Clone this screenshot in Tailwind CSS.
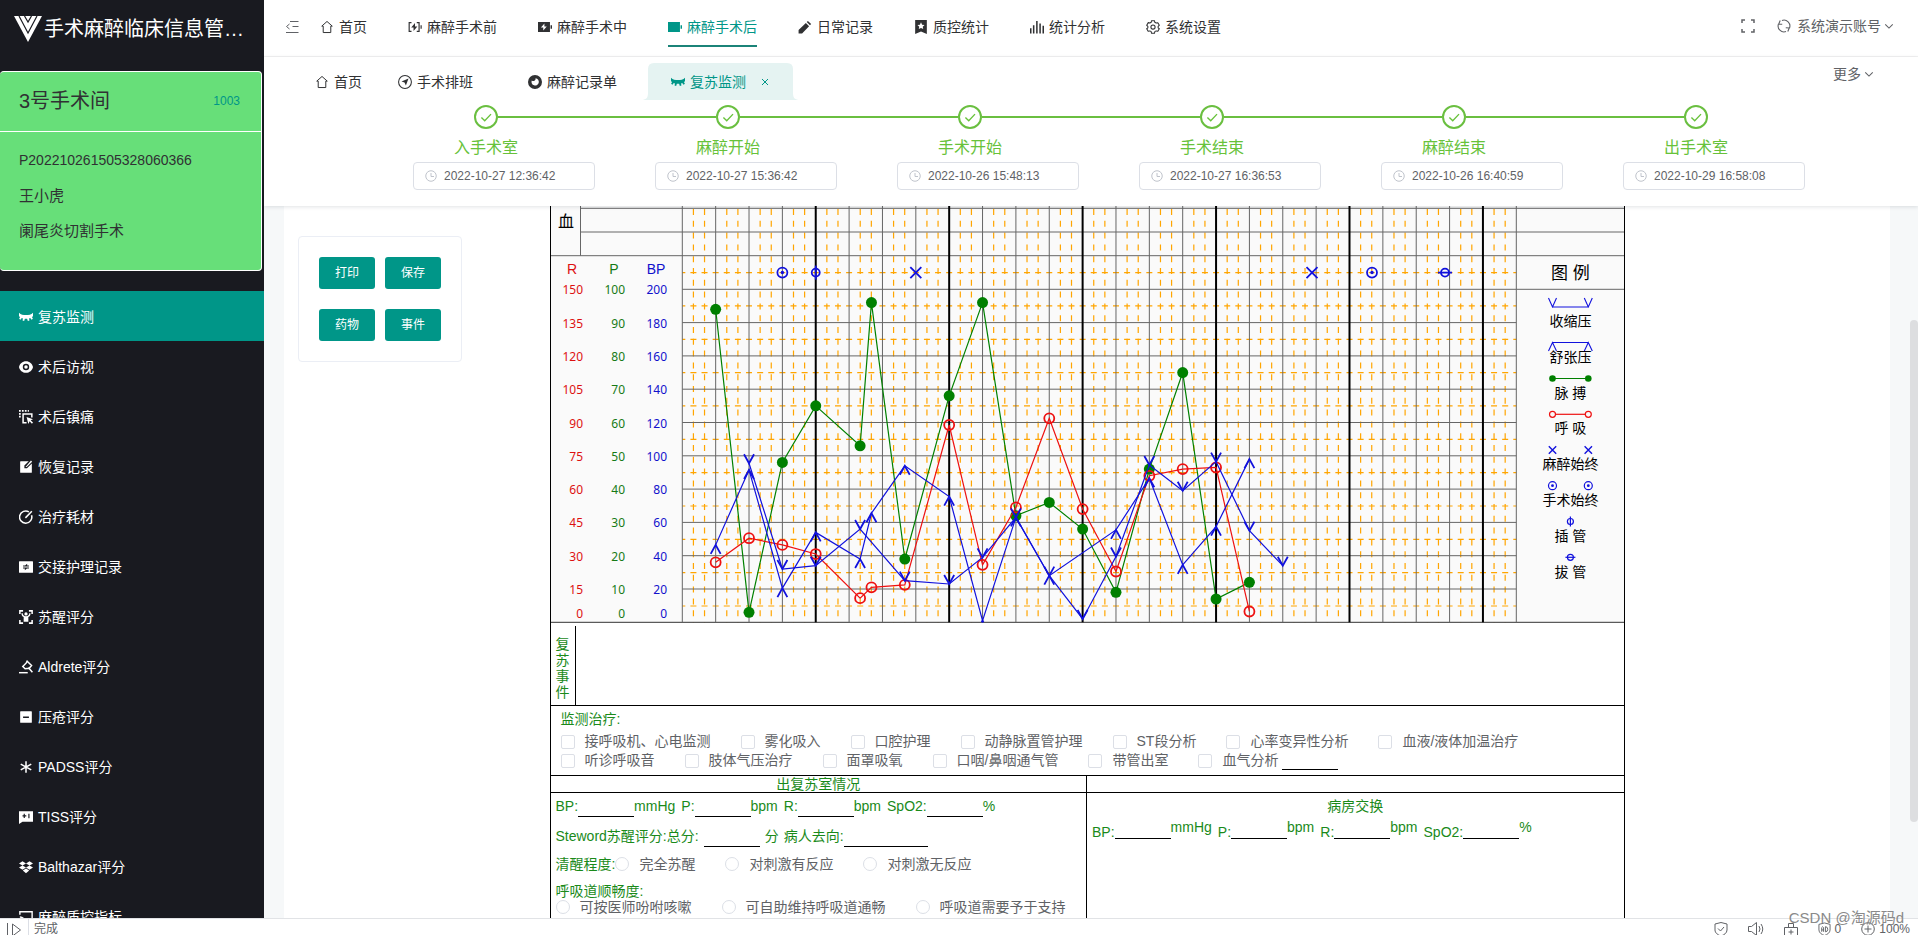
<!DOCTYPE html>
<html lang="zh-CN">
<head>
<meta charset="utf-8">
<title>手术麻醉临床信息管理系统</title>
<script src="https://cdn.jsdelivr.net/npm/@tailwindcss/browser@4"></script>
</head>
<body class="h-screen overflow-hidden bg-white font-['Liberation_Sans','Noto_Sans_CJK_SC',sans-serif] text-[14px] text-[#303133]">
<svg class="hidden" aria-hidden="true">
  <defs>
    <symbol id="home" viewBox="0 0 24 24"><path d="M12 2.500 21 10.500h-2.500V21.500h-13V10.500H3z" fill="none" stroke="currentColor" stroke-width="1.700" stroke-linejoin="round"/></symbol>
    <symbol id="eye-close" viewBox="0 0 24 24"><path fill="currentColor" d="M0 4.500c3 3.200 7.500 4.200 12 4.200s9-1 12-4.200v6l-1.800 1.300 1.600 3.200-2.200 1.600-2.400-3c-.7.400-1.200.7-2 .9l.7 3.600-2.700.7-1.300-3.600h-3.800l-1.300 3.600-2.700-.7.700-3.600c-.8-.2-1.300-.5-2-.9l-2.400 3L.2 15l1.600-3.200L0 10.500z"/></symbol>
    <symbol id="eye" viewBox="0 0 24 24"><path fill="currentColor" fill-rule="evenodd" d="M12 2c6 0 11 4.300 12 10-1 5.700-6 10-12 10S1 17.700 0 12C1 6.300 6 2 12 2zm0 4.500a5.500 5.500 0 1 0 0 11 5.500 5.500 0 0 0 0-11zm0 2.500a3 3 0 1 1 0 6 3 3 0 0 1 0-6z"/></symbol>
    <symbol id="drag-select" viewBox="0 0 24 24"><path fill="currentColor" d="M0 0h3v3H0zM5 0h3v3H5zM10 0h3v3h-3zM15 0h2v3h-2zM0 5h3v3H0zM0 10h3v3H0z"/><path fill="none" stroke="currentColor" stroke-width="2.600" d="M13 22H7V7h15v6"/><path fill="currentColor" d="m13 12 11 4-4 1.600 4 4-1.800 1.800-4-4L16 24z"/></symbol>
    <symbol id="edit-box" viewBox="0 0 24 24"><path fill="currentColor" d="m16.700 2-7.500 7.500V14h4.500L22 5.900V21a1 1 0 0 1-1 1H3a1 1 0 0 1-1-1V3a1 1 0 0 1 1-1z"/><path fill="currentColor" d="m20.500 1 2 2-9.400 9.100-1.900-.1z"/></symbol>
    <symbol id="restart" viewBox="0 0 24 24"><path fill="none" stroke="currentColor" stroke-width="2.600" d="M17 3.200A10.500 10.500 0 1 0 21.500 9M11 13.500 22 2"/></symbol>
    <symbol id="swap-box" viewBox="0 0 24 24"><path fill="currentColor" fill-rule="evenodd" d="M1 2h22a1 1 0 0 1 1 1v18a1 1 0 0 1-1 1H1a1 1 0 0 1-1-1V3a1 1 0 0 1 1-1zm6 9h10V9.300h-3V6.500L10.500 9.300H7zm0 2v1.700h3v2.800l3.500-2.800H17V13z"/></symbol>
    <symbol id="body-scan" viewBox="0 0 24 24"><path fill="none" stroke="currentColor" stroke-width="2.600" d="M1.500 7V1.500H7M17 1.500h5.500V7M22.500 17v5.500H17M7 22.500H1.500V17"/><path fill="currentColor" d="M12 4a2.800 2.800 0 1 1 0 5.600A2.800 2.800 0 0 1 12 4zM6.500 5.500c0 3 1.500 5 5.500 5s5.500-2 5.500-5h2.300c0 3.500-1.300 5.300-3.800 6.500V20H8v-8c-2.500-1.200-3.800-3-3.800-6.500z"/></symbol>
    <symbol id="auction" viewBox="0 0 24 24"><path fill="none" stroke="currentColor" stroke-width="2.600" d="m14 2 7.500 7.500-4 4.500-7 1-4-4L12.500 5zM16 13l7 8"/><path fill="currentColor" d="M0 20.500h15V23H0z"/></symbol>
    <symbol id="minus-box" viewBox="0 0 24 24"><path fill="currentColor" fill-rule="evenodd" d="M3 2h18a1 1 0 0 1 1 1v18a1 1 0 0 1-1 1H3a1 1 0 0 1-1-1V3a1 1 0 0 1 1-1zm4 9v2.500h10V11z"/></symbol>
    <symbol id="asterisk" viewBox="0 0 24 24"><path fill="none" stroke="currentColor" stroke-width="2.600" d="M12 2v20M3 7l18 10M21 7 3 17"/></symbol>
    <symbol id="score-chat" viewBox="0 0 24 24"><path fill="currentColor" fill-rule="evenodd" d="M0 2h24v18H6l-6 4zm10 4.500H8v2.700H6v2h2v2.700h2v-2.700h2.500v-2H10zm6 0v7.500h2V6.500z"/></symbol>
    <symbol id="dropbox" viewBox="0 0 24 24"><path fill="currentColor" d="m6 2 6 3.800-6 3.700-6-3.700zM18 2l6 3.800-6 3.700-6-3.700zM0 13l6-3.500 6 3.500-6 3.800zM18 9.500l6 3.500-6 3.800-6-3.800zM6.500 18l5.500-3.500 5.500 3.500-5.500 4.500z"/></symbol>
    <symbol id="cast" viewBox="0 0 24 24"><path fill="none" stroke="currentColor" stroke-width="2.400" d="M1.500 8V3h21v18H14M1.500 12a9 9 0 0 1 9 9M1.500 17a4 4 0 0 1 4 4"/></symbol>
    <symbol id="battery-line" viewBox="0 0 24 24"><path fill="none" stroke="currentColor" stroke-width="2" d="M6 4.500H2v15h4M15 4.500h4v15h-4M22.500 9v6"/><path fill="currentColor" d="M12 5v6h4l-6.500 8v-6H5.500z"/></symbol>
    <symbol id="battery-charge" viewBox="0 0 24 24"><path fill="currentColor" fill-rule="evenodd" d="M0 3.500h20.500v17H0zm11 2.500-6 7h4v5l6-7h-4z"/><path fill="currentColor" d="M21.500 9h2.500v6h-2.500z"/></symbol>
    <symbol id="battery-full" viewBox="0 0 24 24"><path fill="currentColor" d="M0 3.500h20.500v17H0zM21.500 9h2.500v6h-2.500z"/></symbol>
    <symbol id="pencil" viewBox="0 0 24 24"><path fill="currentColor" d="M1 23v-6L13.500 5 19 10.500 7 23zM15 3.500 17 1.500l5.500 5.500-2 2z"/></symbol>
    <symbol id="bookmark" viewBox="0 0 24 24"><path fill="currentColor" fill-rule="evenodd" d="M2 0h20v24l-10-4.500L2 24zm10 4-1.900 4-4.200.5 3.100 2.900-.8 4.200L12 13.600l3.800 2-.8-4.200 3.100-2.900-4.200-.5z"/></symbol>
    <symbol id="bars" viewBox="0 0 24 24"><path fill="currentColor" d="M0 14h2.600v9H0zM5 9h2.600v14H5zM10.500 1.500h2.600V23h-2.600zM16 6h2.600v17H16zM21.400 10H24v13h-2.600z"/></symbol>
    <symbol id="gear" viewBox="0 0 24 24"><path fill="none" stroke="currentColor" stroke-width="1.800" stroke-linejoin="round" d="m9.500 1.200-.6 2.700-2.300 1.300-2.700-.7L1.200 9l2 1.800v2.600l-2 1.600 2.500 4.400 2.900-.7 2.300 1.300.6 2.800h5l.6-2.800 2.300-1.300 2.900.7 2.500-4.400-2-1.600v-2.600l2-1.800-2.500-4.400-2.900.6-2.300-1.300-.6-2.700z"/><circle cx="12" cy="12" r="3.600" fill="none" stroke="currentColor" stroke-width="1.800"/></symbol>
    <symbol id="compass" viewBox="0 0 24 24"><circle cx="12" cy="12" r="11" fill="none" stroke="currentColor" stroke-width="1.800"/><path fill="currentColor" d="M18 6 13.500 18l-2.300-5-5.200-2z"/></symbol>
    <symbol id="moon-disc" viewBox="0 0 24 24"><path fill="currentColor" fill-rule="evenodd" d="M12 0a12 12 0 1 1 0 24 12 12 0 0 1 0-24zm1 5.500a4 4 0 0 1-6.500 3.800A6.300 6.300 0 1 0 13 5.500z"/></symbol>
    <symbol id="check" viewBox="0 0 24 24"><path fill="none" stroke="currentColor" stroke-width="1.600" d="m6.500 12.500 4 4 7.500-8"/></symbol>
    <symbol id="clock" viewBox="0 0 24 24"><circle cx="12" cy="12" r="10.500" fill="none" stroke="currentColor" stroke-width="2"/><path fill="none" stroke="currentColor" stroke-width="2" d="M12 6v7h6"/></symbol>
    <symbol id="chevron" viewBox="0 0 24 24"><path fill="none" stroke="currentColor" stroke-width="2.600" d="m3 8 9 9 9-9"/></symbol>
  </defs>
</svg>

<div class="flex h-full flex-col">
  <div class="flex min-h-0 flex-1">

    <!-- Sidebar -->
    <aside class="flex w-[264px] shrink-0 flex-col overflow-hidden bg-[#191a20] text-white">
      <div class="flex h-[58px] shrink-0 items-center pl-[14px] text-[20px]">
        <svg class="mr-[2px] h-[26px] w-[28px] shrink-0" viewBox="0 0 28 26"><path fill="#fff" d="M0 0h28L14 26z"/><path fill="none" stroke="#191a20" stroke-width="1.200" d="m5 0 9 17 9-17M10.500 0l3.500 6 3.500-6"/></svg>
        <h1>手术麻醉临床信息管…</h1>
      </div>
      <section class="mt-[13px] mr-[2px] h-[200px] shrink-0 rounded-[4px] border border-l-0 border-white bg-[#67df79] text-[15px] text-[#303133]">
        <div class="flex h-[60px] items-center justify-between border-b border-white pr-[21px] pb-[2px] pl-[19px]">
          <h2 class="text-[20px]">3号手术间</h2>
          <a href="#" class="text-[12px] text-[#009688]">1003</a>
        </div>
        <div class="pt-[11px] pl-[19px] leading-[35px]">
          <p class="text-[14px] leading-[35px]">P202210261505328060366</p>
          <p>王小虎</p>
          <p>阑尾炎切割手术</p>
        </div>
      </section>
      <nav class="mt-[20px]">
        <a href="#" class="flex h-[50px] items-center gap-[5px] bg-[#009688] pt-[2px] pl-[19px]"><svg class="size-[14px]"><use href="#eye-close"/></svg>复苏监测</a>
        <a href="#" class="flex h-[50px] items-center gap-[5px] pt-[2px] pl-[19px]"><svg class="size-[14px]"><use href="#eye"/></svg>术后访视</a>
        <a href="#" class="flex h-[50px] items-center gap-[5px] pt-[2px] pl-[19px]"><svg class="size-[14px]"><use href="#drag-select"/></svg>术后镇痛</a>
        <a href="#" class="flex h-[50px] items-center gap-[5px] pt-[2px] pl-[19px]"><svg class="size-[14px]"><use href="#edit-box"/></svg>恢复记录</a>
        <a href="#" class="flex h-[50px] items-center gap-[5px] pt-[2px] pl-[19px]"><svg class="size-[14px]"><use href="#restart"/></svg>治疗耗材</a>
        <a href="#" class="flex h-[50px] items-center gap-[5px] pt-[2px] pl-[19px]"><svg class="size-[14px]"><use href="#swap-box"/></svg>交接护理记录</a>
        <a href="#" class="flex h-[50px] items-center gap-[5px] pt-[2px] pl-[19px]"><svg class="size-[14px]"><use href="#body-scan"/></svg>苏醒评分</a>
        <a href="#" class="flex h-[50px] items-center gap-[5px] pt-[2px] pl-[19px]"><svg class="size-[14px]"><use href="#auction"/></svg>Aldrete评分</a>
        <a href="#" class="flex h-[50px] items-center gap-[5px] pt-[2px] pl-[19px]"><svg class="size-[14px]"><use href="#minus-box"/></svg>压疮评分</a>
        <a href="#" class="flex h-[50px] items-center gap-[5px] pt-[2px] pl-[19px]"><svg class="size-[14px]"><use href="#asterisk"/></svg>PADSS评分</a>
        <a href="#" class="flex h-[50px] items-center gap-[5px] pt-[2px] pl-[19px]"><svg class="size-[14px]"><use href="#score-chat"/></svg>TISS评分</a>
        <a href="#" class="flex h-[50px] items-center gap-[5px] pt-[2px] pl-[19px]"><svg class="size-[14px]"><use href="#dropbox"/></svg>Balthazar评分</a>
        <a href="#" class="flex h-[50px] items-center gap-[5px] pt-[2px] pl-[19px]"><svg class="size-[14px]"><use href="#cast"/></svg>麻醉质控指标</a>
      </nav>
    </aside>

    <div class="flex min-w-0 flex-1 flex-col">
      <!-- Top navigation -->
      <header class="flex h-[57px] shrink-0 items-center border-b border-[#f2f2f2] pr-[24px] pb-[2px] pl-[21px]">
        <button type="button" aria-label="折叠菜单" class="mr-[21px] text-[#606266]"><svg class="block size-[14px]" viewBox="0 0 14 14"><path fill="none" stroke="currentColor" d="M5 1.500h8.500M7.500 6.500h6M1 12.500h12.500M4.500 4 1.500 6.500l3 2.500"/></svg></button>
        <nav class="flex h-full items-center gap-[41px] leading-[22px]">
          <a href="#" class="flex items-center gap-[5px]"><svg class="size-[14px]"><use href="#home"/></svg>首页</a>
          <a href="#" class="flex items-center gap-[5px]"><svg class="size-[14px]"><use href="#battery-line"/></svg>麻醉手术前</a>
          <a href="#" class="flex items-center gap-[5px]"><svg class="size-[14px]"><use href="#battery-charge"/></svg>麻醉手术中</a>
          <a href="#" class="flex h-[40px] items-center gap-[5px] border-y-2 border-t-transparent border-b-[#1b8378] text-[#009688]"><svg class="size-[14px]"><use href="#battery-full"/></svg>麻醉手术后</a>
          <a href="#" class="flex items-center gap-[5px]"><svg class="size-[14px]"><use href="#pencil"/></svg>日常记录</a>
          <a href="#" class="flex items-center gap-[5px]"><svg class="size-[14px]"><use href="#bookmark"/></svg>质控统计</a>
          <a href="#" class="flex items-center gap-[5px]"><svg class="size-[14px]"><use href="#bars"/></svg>统计分析</a>
          <a href="#" class="flex items-center gap-[5px]"><svg class="size-[14px]"><use href="#gear"/></svg>系统设置</a>
        </nav>
        <div class="ml-auto flex items-center pb-[2px] text-[#606266]">
          <button type="button" aria-label="全屏" class="mr-[22px]"><svg class="block size-[14px]" viewBox="0 0 14 14"><path fill="none" stroke="currentColor" stroke-width="1.500" d="M1 4V1h3M10 1h3v3M13 10v3h-3M4 13H1v-3"/></svg></button>
          <button type="button" aria-label="刷新" class="mr-[6px]"><svg class="block size-[14px]" viewBox="0 0 24 24"><path fill="none" stroke="currentColor" stroke-width="1.900" d="M8.500 2.400a10.200 10.200 0 0 1 13 13M15.500 21.600a10.200 10.200 0 0 1-13-13M5.500 2.500 3 8.500l6 .5M18.500 21.500l2.500-6-6-.5"/></svg></button>
          <button type="button" class="flex items-center gap-[3px] leading-[22px]">系统演示账号<svg class="size-[10px]"><use href="#chevron"/></svg></button>
        </div>
      </header>

      <!-- Open tabs and operation timeline -->
      <div class="z-10 flex h-[149px] shrink-0 flex-col bg-white shadow-[0_1px_4px_rgba(0,21,41,0.12)]">
        <div class="flex h-[43px] items-start pr-[44px] pl-[51px] leading-[22px]">
          <nav class="mt-[6px] flex h-[37px] items-center">
            <a href="#" class="mr-[36px] flex items-center gap-[5px]"><svg class="size-[14px]"><use href="#home"/></svg>首页</a>
            <a href="#" class="mr-[55px] flex items-center gap-[5px]"><svg class="size-[14px]"><use href="#compass"/></svg>手术排班</a>
            <a href="#" class="flex items-center gap-[5px]"><svg class="size-[14px]"><use href="#moon-disc"/></svg>麻醉记录单</a>
            <div class="relative ml-[24px] flex h-[37px] w-[159px] items-center pl-[30px] text-[#009688]">
              <svg class="absolute inset-0 h-full w-full" viewBox="0 0 159 37" preserveAspectRatio="none"><path fill="#e5f3f2" d="M0 37c5 0 7-2 7-7V6q0-6 6-6h133q6 0 6 6v24c0 5 2 7 7 7z"/></svg>
              <a href="#" class="relative flex items-center gap-[5px]"><svg class="size-[14px]"><use href="#eye-close"/></svg>复苏监测</a>
              <button type="button" aria-label="关闭标签" class="relative ml-[15px]"><svg class="block size-[8px]" viewBox="0 0 8 8"><path fill="none" stroke="currentColor" d="m1 1 6 6M7 1 1 7"/></svg></button>
            </div>
          </nav>
          <button type="button" class="mt-[6px] ml-auto flex items-center gap-[3px] text-[#606266]">更多<svg class="size-[10px]"><use href="#chevron"/></svg></button>
        </div>
        <ol class="grid grid-cols-6 px-[101px] pt-[5px] text-[#67c23a]">
          <li class="flex flex-col items-center">
            <div class="flex w-full items-center"><i class="flex-1"></i><span class="size-[24px] rounded-full border-2 border-[#6abf40]"><svg class="size-[20px]"><use href="#check"/></svg></span><i class="h-[2px] flex-1 bg-[#6abf40]"></i></div>
            <label for="t1" class="mt-[6px] text-[16px] leading-[26px]">入手术室</label>
            <div class="mt-px ml-[36px] flex h-[28px] w-[182px] items-center rounded-[4px] border border-[#dcdfe6] pl-[11px]"><svg class="mr-[7px] size-[12px] shrink-0 text-[#c0c4cc]"><use href="#clock"/></svg><input id="t1" class="w-full min-w-0 text-[12px] text-[#606266] outline-none" value="2022-10-27 12:36:42"></div>
          </li>
          <li class="flex flex-col items-center">
            <div class="flex w-full items-center"><i class="h-[2px] flex-1 bg-[#6abf40]"></i><span class="size-[24px] rounded-full border-2 border-[#6abf40]"><svg class="size-[20px]"><use href="#check"/></svg></span><i class="h-[2px] flex-1 bg-[#6abf40]"></i></div>
            <label for="t2" class="mt-[6px] text-[16px] leading-[26px]">麻醉开始</label>
            <div class="mt-px ml-[36px] flex h-[28px] w-[182px] items-center rounded-[4px] border border-[#dcdfe6] pl-[11px]"><svg class="mr-[7px] size-[12px] shrink-0 text-[#c0c4cc]"><use href="#clock"/></svg><input id="t2" class="w-full min-w-0 text-[12px] text-[#606266] outline-none" value="2022-10-27 15:36:42"></div>
          </li>
          <li class="flex flex-col items-center">
            <div class="flex w-full items-center"><i class="h-[2px] flex-1 bg-[#6abf40]"></i><span class="size-[24px] rounded-full border-2 border-[#6abf40]"><svg class="size-[20px]"><use href="#check"/></svg></span><i class="h-[2px] flex-1 bg-[#6abf40]"></i></div>
            <label for="t3" class="mt-[6px] text-[16px] leading-[26px]">手术开始</label>
            <div class="mt-px ml-[36px] flex h-[28px] w-[182px] items-center rounded-[4px] border border-[#dcdfe6] pl-[11px]"><svg class="mr-[7px] size-[12px] shrink-0 text-[#c0c4cc]"><use href="#clock"/></svg><input id="t3" class="w-full min-w-0 text-[12px] text-[#606266] outline-none" value="2022-10-26 15:48:13"></div>
          </li>
          <li class="flex flex-col items-center">
            <div class="flex w-full items-center"><i class="h-[2px] flex-1 bg-[#6abf40]"></i><span class="size-[24px] rounded-full border-2 border-[#6abf40]"><svg class="size-[20px]"><use href="#check"/></svg></span><i class="h-[2px] flex-1 bg-[#6abf40]"></i></div>
            <label for="t4" class="mt-[6px] text-[16px] leading-[26px]">手术结束</label>
            <div class="mt-px ml-[36px] flex h-[28px] w-[182px] items-center rounded-[4px] border border-[#dcdfe6] pl-[11px]"><svg class="mr-[7px] size-[12px] shrink-0 text-[#c0c4cc]"><use href="#clock"/></svg><input id="t4" class="w-full min-w-0 text-[12px] text-[#606266] outline-none" value="2022-10-27 16:36:53"></div>
          </li>
          <li class="flex flex-col items-center">
            <div class="flex w-full items-center"><i class="h-[2px] flex-1 bg-[#6abf40]"></i><span class="size-[24px] rounded-full border-2 border-[#6abf40]"><svg class="size-[20px]"><use href="#check"/></svg></span><i class="h-[2px] flex-1 bg-[#6abf40]"></i></div>
            <label for="t5" class="mt-[6px] text-[16px] leading-[26px]">麻醉结束</label>
            <div class="mt-px ml-[36px] flex h-[28px] w-[182px] items-center rounded-[4px] border border-[#dcdfe6] pl-[11px]"><svg class="mr-[7px] size-[12px] shrink-0 text-[#c0c4cc]"><use href="#clock"/></svg><input id="t5" class="w-full min-w-0 text-[12px] text-[#606266] outline-none" value="2022-10-26 16:40:59"></div>
          </li>
          <li class="flex flex-col items-center">
            <div class="flex w-full items-center"><i class="h-[2px] flex-1 bg-[#6abf40]"></i><span class="size-[24px] rounded-full border-2 border-[#6abf40]"><svg class="size-[20px]"><use href="#check"/></svg></span><i class="flex-1"></i></div>
            <label for="t6" class="mt-[6px] text-[16px] leading-[26px]">出手术室</label>
            <div class="mt-px ml-[36px] flex h-[28px] w-[182px] items-center rounded-[4px] border border-[#dcdfe6] pl-[11px]"><svg class="mr-[7px] size-[12px] shrink-0 text-[#c0c4cc]"><use href="#clock"/></svg><input id="t6" class="w-full min-w-0 text-[12px] text-[#606266] outline-none" value="2022-10-29 16:58:08"></div>
          </li>
        </ol>
      </div>

      <!-- Record sheet -->
      <main class="relative min-h-0 flex-1 overflow-hidden bg-[#f6f8f9] pr-[28px] pl-[20px]">
        <div class="grid min-h-full grid-cols-[1fr_auto_1fr] bg-white">
          <div class="pt-[30px] pl-[14px]">
            <div class="grid h-[126px] w-[164px] grid-cols-2 content-start gap-x-[10px] gap-y-[20px] rounded-[4px] border border-[#ebeef5] px-[20px] pt-[20px] text-[12px] text-white">
              <button type="button" class="h-[32px] rounded-[3px] bg-[#009688]">打印</button>
              <button type="button" class="h-[32px] rounded-[3px] bg-[#009688]">保存</button>
              <button type="button" class="h-[32px] rounded-[3px] bg-[#009688]">药物</button>
              <button type="button" class="h-[32px] rounded-[3px] bg-[#009688]">事件</button>
            </div>
          </div>

          <article class="w-[1075px] border-x border-black">
            <svg id="chart" class="block h-[417px] w-full" viewBox="0 0 1073 417" role="img" aria-label="生命体征曲线"></svg>

            <section class="flex h-[83px] border-b border-black pt-[3px]">
              <h3 class="flex w-[25px] flex-col items-center border-r border-black pt-[10px] leading-[16px] text-[#1a8a1a]"><span>复</span><span>苏</span><span>事</span><span>件</span></h3>
            </section>

            <section class="h-[70px] border-b border-black pt-[4px] pl-[10px] leading-[19px] text-[#606266]">
              <h3 class="mb-[3px] text-[#1a8a1a]">监测治疗:</h3>
              <div class="flex gap-[30px]">
                <label class="flex items-center gap-[10px]"><input type="checkbox" class="size-[14px] appearance-none rounded-[2px] border border-[#dcdfe6]">接呼吸机、心电监测</label>
                <label class="flex items-center gap-[10px]"><input type="checkbox" class="size-[14px] appearance-none rounded-[2px] border border-[#dcdfe6]">雾化吸入</label>
                <label class="flex items-center gap-[10px]"><input type="checkbox" class="size-[14px] appearance-none rounded-[2px] border border-[#dcdfe6]">口腔护理</label>
                <label class="flex items-center gap-[10px]"><input type="checkbox" class="size-[14px] appearance-none rounded-[2px] border border-[#dcdfe6]">动静脉置管护理</label>
                <label class="flex items-center gap-[10px]"><input type="checkbox" class="size-[14px] appearance-none rounded-[2px] border border-[#dcdfe6]">ST段分析</label>
                <label class="flex items-center gap-[10px]"><input type="checkbox" class="size-[14px] appearance-none rounded-[2px] border border-[#dcdfe6]">心率变异性分析</label>
                <label class="flex items-center gap-[10px]"><input type="checkbox" class="size-[14px] appearance-none rounded-[2px] border border-[#dcdfe6]">血液/液体加温治疗</label>
              </div>
              <div class="flex gap-[30px]">
                <label class="flex items-center gap-[10px]"><input type="checkbox" class="size-[14px] appearance-none rounded-[2px] border border-[#dcdfe6]">听诊呼吸音</label>
                <label class="flex items-center gap-[10px]"><input type="checkbox" class="size-[14px] appearance-none rounded-[2px] border border-[#dcdfe6]">肢体气压治疗</label>
                <label class="flex items-center gap-[10px]"><input type="checkbox" class="size-[14px] appearance-none rounded-[2px] border border-[#dcdfe6]">面罩吸氧</label>
                <label class="flex items-center gap-[10px]"><input type="checkbox" class="size-[14px] appearance-none rounded-[2px] border border-[#dcdfe6]">口咽/鼻咽通气管</label>
                <label class="flex items-center gap-[10px]"><input type="checkbox" class="size-[14px] appearance-none rounded-[2px] border border-[#dcdfe6]">带管出室</label>
                <div class="flex gap-[4px]">
                  <label class="flex items-center gap-[10px]"><input type="checkbox" class="size-[14px] appearance-none rounded-[2px] border border-[#dcdfe6]">血气分析</label>
                  <input aria-label="血气分析结果" class="h-[19px] w-[56px] border-b border-black outline-none">
                </div>
              </div>
            </section>

            <div class="grid grid-cols-2 text-[#1a8a1a]">
              <section class="border-r border-black">
                <h3 class="h-[17px] border-b border-black text-center leading-[16px]">出复苏室情况</h3>
                <div class="pl-[5px]">
                  <div class="flex h-[24px] leading-[26px]">
                    <label for="bp1">BP:</label><input id="bp1" class="w-[56px] border-b border-black outline-none"><span class="mr-[6px]">mmHg</span>
                    <label for="p1">P:</label><input id="p1" class="w-[56px] border-b border-black outline-none"><span class="mr-[6px]">bpm</span>
                    <label for="r1">R:</label><input id="r1" class="w-[56px] border-b border-black outline-none"><span class="mr-[6px]">bpm</span>
                    <label for="s1">SpO2:</label><input id="s1" class="w-[56px] border-b border-black outline-none"><span>%</span>
                  </div>
                  <div class="mt-[6px] flex h-[24px] leading-[26px]">
                    <span>Steword苏醒评分:</span><label for="sc">总分:</label><input id="sc" class="mx-[5px] w-[56px] border-b border-black outline-none"><span class="mr-[5px]">分</span>
                    <label for="go">病人去向:</label><input id="go" class="w-[84px] border-b border-black outline-none">
                  </div>
                  <fieldset class="mt-[5px] flex h-[24px] items-center text-[#606266]">
                    <span class="text-[#1a8a1a]">清醒程度:</span>
                    <label class="mr-[30px] flex items-center gap-[10px]"><input type="radio" name="wake" class="size-[14px] appearance-none rounded-full border border-[#dcdfe6]">完全苏醒</label>
                    <label class="mr-[30px] flex items-center gap-[10px]"><input type="radio" name="wake" class="size-[14px] appearance-none rounded-full border border-[#dcdfe6]">对刺激有反应</label>
                    <label class="flex items-center gap-[10px]"><input type="radio" name="wake" class="size-[14px] appearance-none rounded-full border border-[#dcdfe6]">对刺激无反应</label>
                  </fieldset>
                  <fieldset class="mt-[7px] text-[#606266]">
                    <legend class="leading-[16px] text-[#1a8a1a]">呼吸道顺畅度:</legend>
                    <div class="flex h-[16px] gap-[30px]">
                      <label class="flex items-center gap-[10px]"><input type="radio" name="airway" class="size-[14px] appearance-none rounded-full border border-[#dcdfe6]">可按医师吩咐咳嗽</label>
                      <label class="flex items-center gap-[10px]"><input type="radio" name="airway" class="size-[14px] appearance-none rounded-full border border-[#dcdfe6]">可自助维持呼吸道通畅</label>
                      <label class="flex items-center gap-[10px]"><input type="radio" name="airway" class="size-[14px] appearance-none rounded-full border border-[#dcdfe6]">呼吸道需要予于支持</label>
                    </div>
                  </fieldset>
                </div>
                <div class="h-[20px]"></div>
              </section>
              <section>
                <div class="h-[17px] border-b border-black"></div>
                <h3 class="text-center leading-[27px]">病房交换</h3>
                <div class="flex h-[19px] items-end pl-[5px] leading-[14px]">
                  <label for="bp2">BP:</label><input id="bp2" class="h-[18px] w-[56px] border-b border-black outline-none"><span class="mr-[6px] self-start">mmHg</span>
                  <label for="p2">P:</label><input id="p2" class="h-[18px] w-[56px] border-b border-black outline-none"><span class="mr-[6px] self-start">bpm</span>
                  <label for="r2">R:</label><input id="r2" class="h-[18px] w-[56px] border-b border-black outline-none"><span class="mr-[6px] self-start">bpm</span>
                  <label for="s2">SpO2:</label><input id="s2" class="h-[18px] w-[56px] border-b border-black outline-none"><span class="self-start">%</span>
                </div>
              </section>
            </div>
          </article>
          <div></div>
        </div>
        <div class="absolute top-[114px] right-0 h-[502px] w-[8px] rounded-full bg-[#dddee0]"></div>
      </main>
    </div>
  </div>

  <!-- Browser status bar -->
  <footer class="relative flex h-[17px] shrink-0 items-start border-t border-[#e1e3e6] bg-white text-[12px] leading-[20px] text-[#606266]">
    <div class="flex h-full w-full overflow-hidden">
      <svg class="mt-[4px] ml-[6px] h-[14px] w-[16px] shrink-0" viewBox="0 0 16 14"><path fill="none" stroke="currentColor" d="M1.500 0v13M6.500 1v12l8-6z"/></svg>
      <span class="ml-[6px] border-l border-[#dcdfe6] pl-[5px]">完成</span>
      <div class="ml-auto flex gap-[20px] pr-[8px]">
        <svg class="mt-[3px] h-[14px] w-[14px]" viewBox="0 0 14 14"><path fill="none" stroke="currentColor" d="M7 .5 13 2v6c0 3-3 5-6 6-3-1-6-3-6-6V2zM4 6.500 6.500 9 10 5"/></svg>
        <svg class="mt-[3px] h-[14px] w-[16px]" viewBox="0 0 16 14"><path fill="none" stroke="currentColor" d="M.5 4.500h3l5-4v13l-5-4h-3zM11 4q2 3 0 6M13 2q3.500 5 0 10"/></svg>
        <svg class="mt-[3px] h-[14px] w-[14px]" viewBox="0 0 14 14"><path fill="none" stroke="currentColor" d="M.5 5.500h13V14H.5zM4.500 5V1.500h5V5M7 7.500v5M4.500 10h5"/></svg>
        <span class="flex gap-[4px]"><svg class="mt-[3px] h-[14px] w-[13px]" viewBox="0 0 14 14"><path fill="none" stroke="currentColor" d="M7 .5 13 2v6c0 3-3 5-6 6-3-1-6-3-6-6V2zM4 10V5.500l1-1 1 1V10M4 8h2M8 4.500v5.500q2.500 0 2.500-2.700T8 4.500"/></svg>0</span>
        <span class="flex gap-[4px]"><svg class="mt-[3px] size-[14px]" viewBox="0 0 14 14"><circle cx="7" cy="7" r="6.300" fill="none" stroke="currentColor"/><path stroke="currentColor" d="M7 3.500v7M3.500 7h7"/></svg>100%</span>
      </div>
    </div>
    <div class="absolute right-[14px] bottom-[5px] text-[15px] leading-[24px] whitespace-nowrap text-[#8a8a8a]">CSDN @淘源码d</div>
  </footer>
</div>

<script>
const svg = document.getElementById('chart');
let out = '';
const X0 = 131.3, COL = 33.36, COLS = 25, Y0 = 416.3, X1 = X0 + COL * COLS;
const px = t => X0 + COL * t;
const py = v => Y0 - v * 1.665;
const line = (x1, y1, x2, y2, c, w, extra = '') => { out += `<line x1="${x1}" y1="${y1}" x2="${x2}" y2="${y2}" stroke="${c}" stroke-width="${w}" ${extra}/>`; };
const path = (d, c, w) => { out += `<path d="${d}" fill="none" stroke="${c}" stroke-width="${w}"/>`; };
const circle = (x, y, r, fill, c, w) => { out += `<circle cx="${x}" cy="${y}" r="${r}" fill="${fill}" stroke="${c}" stroke-width="${w}"/>`; };
const text = (x, y, s, c, size, anchor, font) => { out += `<text x="${x}" y="${y}" fill="${c}" font-size="${size}" text-anchor="${anchor}" font-family="${font}">${s}</text>`; };
const SANS = "Liberation Sans, Noto Sans CJK SC, sans-serif", NUM = "Noto Sans, sans-serif";

out += '<rect width="1073" height="417" fill="#fafafa"/>';

// Dashed minor grid
for (let i = 0; i < COLS; i++) for (const k of [1, 2])
  line(px(i + k / 3), 3, px(i + k / 3), Y0, 'orange', 1.2, 'stroke-dasharray="6 5.8"');
for (let k = 0; k <= 10; k++)
  line(X0, 66.6 + k * 33.34, X1, 66.6 + k * 33.34, 'orange', 1.2, 'stroke-dasharray="6 5.12" stroke-dashoffset="3"');

// Solid major grid
const GRID = '#666';
line(29.5, 2.3, 1073, 2.3, GRID, 1);
line(29.5, 26, 1073, 26, GRID, 1);
line(0, 49.7, 1073, 49.7, GRID, 1);
line(0, Y0, 1073, Y0, '#333', 1);
line(29.5, 0, 29.5, 49.7, GRID, 1);
line(X1, 83.3, 1073, 83.3, GRID, 1);
for (let k = 1; k <= 10; k++) line(X0, py(k * 20), X1, py(k * 20), GRID, 1);
for (let i = 0; i <= COLS; i++) {
  const thick = i % 4 === 0 && i > 0;
  line(px(i), 0, px(i), Y0, thick ? '#000' : GRID, thick ? 2 : 1);
}

// Axis labels
text(21, 68, 'R', '#d11', 14, 'middle', SANS);
text(63, 68, 'P', '#167a16', 14, 'middle', SANS);
text(105, 68, 'BP', '#11c', 14, 'middle', SANS);
for (let k = 0; k <= 10; k++) {
  const y = k === 0 ? 412 : py(k * 20) + 5;
  text(32, y, k * 15, '#d11', 12, 'end', NUM);
  text(74, y, k * 10, '#167a16', 12, 'end', NUM);
  text(116, y, k * 20, '#11c', 12, 'end', NUM);
}
text(15, 21, '血', '#000', 16, 'middle', SANS);

// Series: [column, value on the 0-200 scale]
const pulse = [[1,188],[2,6],[3,96],[4,130],[5.33,106],[5.67,192],[6.67,38],[8,136],[9,192],[10,64],[11,72],[12,56],[13,18],[14,92],[15,150],[16,14],[17,24]];
const resp = [[1,36],[2,50.5],[3,46.5],[4,41],[5.33,14.5],[5.67,21],[6.67,22.5],[8,118.5],[9,34.5],[10,69],[11,122.5],[12,68],[13,30.5],[14,88],[15,92],[16,93],[17,6.5]];
const dia = [[1,46.5],[2,91.5],[3,20.5],[4,54],[5.33,38],[5.67,65.5],[6.67,94],[8,75.5],[9,1],[10,63],[11,28],[13,55.5],[14,86.5],[15,34.5],[16,57.5],[17,98]];
const sys = [[2,95.5],[3,32],[4,34],[5.33,56],[6.67,25],[8,23],[9,39],[10,63],[11,28],[12,2],[13,39.5],[14,94.5],[15,79],[16,96.5],[17,55],[18,34]];
const poly = (s, c) => path('M' + s.map(p => px(p[0]) + ' ' + py(p[1])).join('L'), c, 1.2);
poly(pulse, 'green'); pulse.forEach(p => circle(px(p[0]), py(p[1]), 5.5, 'green', 'none', 0));
poly(resp, '#e11'); resp.forEach(p => circle(px(p[0]), py(p[1]), 5, 'none', '#e11', 1.8));
poly(dia, '#11d'); dia.forEach(p => { const x = px(p[0]), y = py(p[1]), h = Math.min(9, Y0 - y); path(`M${x - h * 0.55} ${y + h}L${x} ${y}L${x + h * 0.55} ${y + h}`, '#11d', 1.8); });
poly(sys, '#11d'); sys.forEach(p => { const x = px(p[0]), y = py(p[1]); path(`M${x - 5} ${y - 9}L${x} ${y}L${x + 5} ${y - 9}`, '#11d', 1.8); });

// Event markers
const dot = (x, y, r, w) => { circle(x, y, r, 'none', '#11d', w); circle(x, y, r * 0.35, '#11d', 'none', 0); };
const cross = (x, y, r, w) => path(`M${x - r} ${y - r}l${2 * r} ${2 * r}m0 ${-2 * r}l${-2 * r} ${2 * r}`, '#11d', w);
const my = 66.6;
dot(px(3), my, 5, 1.8); dot(821, my, 5, 1.8);
cross(px(7), my, 5.5, 1.8); cross(761, my, 5.5, 1.8);
circle(px(4), my, 4, 'none', '#11d', 1.8); path(`M${px(4)} ${my - 7}v14`, '#11d', 1.8);
circle(894, my, 4, 'none', '#11d', 1.8); path(`M887 ${my}h14`, '#11d', 1.8);

// Legend
const L = 1001.5, R = 1037.3, M = 1019.4;
text(M, 73, '图 例', '#000', 17, 'middle', SANS);
path(`M${L - 4} 92L${L} 101L${L + 4} 92M${L} 101H${R}M${R - 4} 92L${R} 101L${R + 4} 92`, '#11d', 1.1);
path(`M${L - 4} 145L${L} 136.5L${L + 4} 145M${L} 136.5H${R}M${R - 4} 145L${R} 136.5L${R + 4} 145`, '#11d', 1.1);
line(L, 172.5, R, 172.5, 'green', 1.2); circle(L, 172.5, 3.3, 'green', 'none', 0); circle(R, 172.5, 3.3, 'green', 'none', 0);
line(L + 3, 208.3, R - 3, 208.3, '#e11', 1.2); circle(L, 208.3, 3, 'none', '#e11', 1.2); circle(R, 208.3, 3, 'none', '#e11', 1.2);
cross(L, 244, 3.7, 1.4); cross(R, 244, 3.7, 1.4);
dot(L, 279.7, 4, 1.2); dot(R, 279.7, 4, 1.2);
circle(M, 315.5, 3, 'none', '#11d', 1.2); path(`M${M} 310.5v10`, '#11d', 1.2);
circle(M, 351.3, 3, 'none', '#11d', 1.2); path(`M${M - 5} 351.3h10`, '#11d', 1.2);
['收缩压', '舒张压', '脉 搏', '呼 吸', '麻醉始终', '手术始终', '插 管', '拔 管'].forEach((s, i) => text(M, 120 + i * 35.8, s, '#000', 14, 'middle', SANS));

svg.innerHTML = out;
</script>
</body>
</html>
